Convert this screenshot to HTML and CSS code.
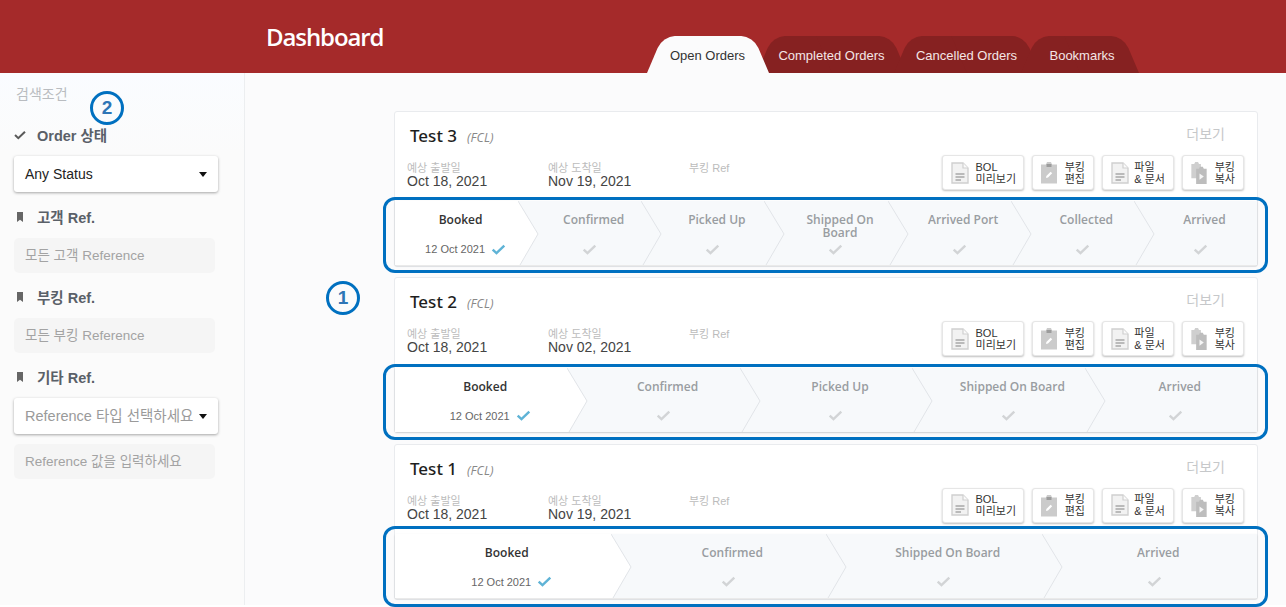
FILE: index.html
```html
<!DOCTYPE html>
<html lang="ko">
    <head>
        <meta charset="UTF-8">
        <meta name="viewport" content="width=device-width, initial-scale=1.0">
        <title>Dashboard</title>
        <link rel="stylesheet" href="styles.css">
    </head>
    <body>
        <svg class="sprites" width="0" height="0">
            <symbol id="chev" viewBox="0 0 21 64" preserveAspectRatio="none">
                <path d="M0 0 L20 33 L2 64 L0 64 Z" stroke="none"/>
                <path d="M0 0 L20 33 L2 64" fill="none" stroke="#e1e4e8"/>
            </symbol>
            <symbol id="check" viewBox="0 0 14 11">
                <path d="M1.2 5.6 L5 9.2 L12.8 1.6" fill="none" stroke="currentColor" stroke-width="2.4"/>
            </symbol>
            <symbol id="bookmark" viewBox="0 0 8 10">
                <path d="M1 0 H7 V10 L4 7.8 L1 10 Z" fill="#666"/>
            </symbol>
            <symbol id="doc" viewBox="0 0 18 22">
                <path d="M1 1 H12 L17 6 V21 H1 Z" fill="#f2f2f2" stroke="#d0d0d0" stroke-width="1.4"/>
                <path d="M12 1 V6 H17" fill="#fafafa" stroke="#d0d0d0" stroke-width="1.2"/>
                <path d="M4.5 12 H13.5 M4.5 15 H13.5 M4.5 18 H10" stroke="#a8a8a8" stroke-width="1.3"/>
            </symbol>
            <symbol id="edit" viewBox="0 0 16 22">
                <path d="M0 3 H5 L6 0.5 H10 L11 3 H16 V22 H0 Z" fill="#cbcbcb"/>
                <path d="M5.5 2.5 H10.5 V5.5 H5.5 Z" fill="#9c9c9c"/>
                <path d="M5 16.5 L5.4 14.4 L9.6 10.2 L11.2 11.8 L7 16 Z" fill="#fff"/>
            </symbol>
            <symbol id="copy" viewBox="0 0 16 24">
                <path d="M0 3 H3 L4 1 H7 L8 3 H10 V18 H0 Z" fill="#cfcfcf"/>
                <path d="M5 8 H8 L9 6 H12 L13 8 H16 V24 H5 Z" fill="#bdbdbd"/>
                <path d="M8.5 13 L13 16.2 L8.5 19.5 Z" fill="#f6f6f6"/>
            </symbol>
        </svg>

        <header class="topbar">
            <h1 class="title">Dashboard</h1>
            <nav class="tabs">
                <a class="tab active tab-open">Open Orders</a>
                <a class="tab tab-completed">Completed Orders</a>
                <a class="tab tab-cancelled">Cancelled Orders</a>
                <a class="tab tab-bookmarks">Bookmarks</a>
            </nav>
        </header>

        <div class="layout">
            <aside class="sidebar">
                <div class="side-title">검색조건</div>

                <div class="side-label"><svg class="side-icon check-icon"><use href="#check"/></svg>Order 상태</div>
                <div class="select">Any Status</div>

                <div class="side-label"><svg class="side-icon"><use href="#bookmark"/></svg>고객 Ref.</div>
                <div class="field">모든 고객 Reference</div>

                <div class="side-label"><svg class="side-icon"><use href="#bookmark"/></svg>부킹 Ref.</div>
                <div class="field">모든 부킹 Reference</div>

                <div class="side-label"><svg class="side-icon"><use href="#bookmark"/></svg>기타 Ref.</div>
                <div class="select muted">Reference 타입 선택하세요</div>
                <div class="field">Reference 값을 입력하세요</div>
            </aside>

            <main class="orders">
                <section class="card">
                    <div class="card-head">
                        <div><span class="card-name">Test 3</span><span class="card-type">(FCL)</span></div>
                        <a class="more">더보기</a>
                    </div>
                    <div class="card-info">
                        <div class="meta"><span>예상 출발일</span>Oct 18, 2021</div>
                        <div class="meta"><span>예상 도착일</span>Nov 19, 2021</div>
                        <div class="meta"><span>부킹 Ref</span></div>
                        <div class="actions">
                            <a class="btn btn-bol"><svg class="btn-doc"><use href="#doc"/></svg><span>BOL<br>미리보기</span></a>
                            <a class="btn btn-edit"><svg class="btn-clip"><use href="#edit"/></svg><span class="center">부킹<br>편집</span></a>
                            <a class="btn btn-files"><svg class="btn-doc"><use href="#doc"/></svg><span>파일<br>&amp; 문서</span></a>
                            <a class="btn btn-copy"><svg class="btn-clip"><use href="#copy"/></svg><span class="center">부킹<br>복사</span></a>
                        </div>
                    </div>
                    <div class="stepper">
                        <div class="step done"><b>Booked</b><p>12 Oct 2021<svg class="tick"><use href="#check"/></svg></p><svg class="chev"><use href="#chev"/></svg></div>
                        <div class="step"><b>Confirmed</b><p><svg class="tick"><use href="#check"/></svg></p><svg class="chev"><use href="#chev"/></svg></div>
                        <div class="step"><b>Picked Up</b><p><svg class="tick"><use href="#check"/></svg></p><svg class="chev"><use href="#chev"/></svg></div>
                        <div class="step"><b class="two-line">Shipped On Board</b><p><svg class="tick"><use href="#check"/></svg></p><svg class="chev"><use href="#chev"/></svg></div>
                        <div class="step"><b>Arrived Port</b><p><svg class="tick"><use href="#check"/></svg></p><svg class="chev"><use href="#chev"/></svg></div>
                        <div class="step"><b>Collected</b><p><svg class="tick"><use href="#check"/></svg></p><svg class="chev"><use href="#chev"/></svg></div>
                        <div class="step"><b>Arrived</b><p><svg class="tick"><use href="#check"/></svg></p></div>
                    </div>
                </section>

                <section class="card">
                    <div class="card-head">
                        <div><span class="card-name">Test 2</span><span class="card-type">(FCL)</span></div>
                        <a class="more">더보기</a>
                    </div>
                    <div class="card-info">
                        <div class="meta"><span>예상 출발일</span>Oct 18, 2021</div>
                        <div class="meta"><span>예상 도착일</span>Nov 02, 2021</div>
                        <div class="meta"><span>부킹 Ref</span></div>
                        <div class="actions">
                            <a class="btn btn-bol"><svg class="btn-doc"><use href="#doc"/></svg><span>BOL<br>미리보기</span></a>
                            <a class="btn btn-edit"><svg class="btn-clip"><use href="#edit"/></svg><span class="center">부킹<br>편집</span></a>
                            <a class="btn btn-files"><svg class="btn-doc"><use href="#doc"/></svg><span>파일<br>&amp; 문서</span></a>
                            <a class="btn btn-copy"><svg class="btn-clip"><use href="#copy"/></svg><span class="center">부킹<br>복사</span></a>
                        </div>
                    </div>
                    <div class="stepper">
                        <div class="step done"><b>Booked</b><p>12 Oct 2021<svg class="tick"><use href="#check"/></svg></p><svg class="chev"><use href="#chev"/></svg></div>
                        <div class="step"><b>Confirmed</b><p><svg class="tick"><use href="#check"/></svg></p><svg class="chev"><use href="#chev"/></svg></div>
                        <div class="step"><b>Picked Up</b><p><svg class="tick"><use href="#check"/></svg></p><svg class="chev"><use href="#chev"/></svg></div>
                        <div class="step"><b>Shipped On Board</b><p><svg class="tick"><use href="#check"/></svg></p><svg class="chev"><use href="#chev"/></svg></div>
                        <div class="step"><b>Arrived</b><p><svg class="tick"><use href="#check"/></svg></p></div>
                    </div>
                </section>

                <section class="card">
                    <div class="card-head">
                        <div><span class="card-name">Test 1</span><span class="card-type">(FCL)</span></div>
                        <a class="more">더보기</a>
                    </div>
                    <div class="card-info">
                        <div class="meta"><span>예상 출발일</span>Oct 18, 2021</div>
                        <div class="meta"><span>예상 도착일</span>Nov 19, 2021</div>
                        <div class="meta"><span>부킹 Ref</span></div>
                        <div class="actions">
                            <a class="btn btn-bol"><svg class="btn-doc"><use href="#doc"/></svg><span>BOL<br>미리보기</span></a>
                            <a class="btn btn-edit"><svg class="btn-clip"><use href="#edit"/></svg><span class="center">부킹<br>편집</span></a>
                            <a class="btn btn-files"><svg class="btn-doc"><use href="#doc"/></svg><span>파일<br>&amp; 문서</span></a>
                            <a class="btn btn-copy"><svg class="btn-clip"><use href="#copy"/></svg><span class="center">부킹<br>복사</span></a>
                        </div>
                    </div>
                    <div class="stepper">
                        <div class="step done"><b>Booked</b><p>12 Oct 2021<svg class="tick"><use href="#check"/></svg></p><svg class="chev"><use href="#chev"/></svg></div>
                        <div class="step"><b>Confirmed</b><p><svg class="tick"><use href="#check"/></svg></p><svg class="chev"><use href="#chev"/></svg></div>
                        <div class="step"><b>Shipped On Board</b><p><svg class="tick"><use href="#check"/></svg></p><svg class="chev"><use href="#chev"/></svg></div>
                        <div class="step"><b>Arrived</b><p><svg class="tick"><use href="#check"/></svg></p></div>
                    </div>
                </section>
            </main>
        </div>

        <!-- blue callouts drawn on top of the page -->
        <div class="callout-num num-2">2</div>
        <div class="callout-num num-1">1</div>
        <div class="callout-frame frame-1"></div>
        <div class="callout-frame frame-2"></div>
        <div class="callout-frame frame-3"></div>
    </body>
</html>
```

FILE: styles.css
```css
* {
    box-sizing: border-box;
}
html, body {
    height: 607px;
    overflow: hidden;
}
body {
    margin: 0;
    position: relative;
    background: #fff;
    color: #333;
    font-family: "Liberation Sans", "Noto Sans CJK KR", sans-serif;
}
.sprites {
    position: absolute;
}

/* header */
.topbar {
    display: grid;
    grid-template-columns: 647px 1fr;
    height: 73px;
    background: #a52a2a;
}
.title {
    margin: 0;
    padding: 21px 0 0 266px;
    font-family: "Open Sans", sans-serif;
    font-size: 24px;
    line-height: 32px;
    font-weight: 600;
    letter-spacing: -1.1px;
    color: #fff;
}
.tabs {
    display: flex;
    align-items: flex-end;
}
.tab {
    position: relative;
    z-index: 1;
    display: block;
    height: 37px;
    line-height: 39px;
    text-align: center;
    font-size: 13px;
    color: #f4e6e6;
}
.tab::before, .tab::after {
    content: "";
    position: absolute;
    top: 0;
    bottom: 0;
    width: 50%;
    background: #862121;
    z-index: -1;
}
.tab::before {
    left: 0;
    transform-origin: bottom left;
    transform: skewX(-23deg);
    border-radius: 12px 0 0 0;
}
.tab::after {
    right: 0;
    transform-origin: bottom right;
    transform: skewX(23deg);
    border-radius: 0 12px 0 0;
}
.tab.active {
    z-index: 2;
    color: #333;
}
.tab.active::before, .tab.active::after {
    background: #fbfbfc;
}
.tab-open {
    width: 121px;
    margin-left: 0;
}
.tab-completed {
    width: 149px;
    margin-left: -11px;
}
.tab-cancelled {
    width: 145px;
    margin-left: -12px;
}
.tab-bookmarks {
    width: 117px;
    margin-left: -18px;
    padding-left: 5px;
}

.layout {
    display: grid;
    grid-template-columns: 245px 1fr;
    height: 532px;
    background: #fbfbfc;
}

/* sidebar */
.sidebar {
    padding: 12px 26px 0 14px;
    border-right: 1px solid #eceef0;
    background: linear-gradient(#fafcff, #fbfbfb 80px);
}
.side-title {
    padding-left: 2px;
    font-size: 14px;
    line-height: 18px;
    color: #b9bcc0;
}
.side-label {
    display: flex;
    align-items: center;
    height: 20px;
    margin: 0 0 10px;
    padding-bottom: 3px;
    font-size: 14.5px;
    font-weight: bold;
    color: #5a6068;
}
.side-label:nth-of-type(2) {
    margin-top: 23px;
}
.side-icon {
    width: 8px;
    height: 10px;
    margin: 0 13px 0 2px;
    flex: none;
}
.check-icon {
    width: 12px;
    height: 10px;
    margin: 0 11px 0 0;
    color: #5a5a5a;
}
.select {
    position: relative;
    width: 204px;
    height: 36px;
    margin-bottom: 16px;
    padding: 0 11px;
    line-height: 36px;
    font-size: 14px;
    color: #222;
    background: #fff;
    border-radius: 3px;
    box-shadow: 0 1px 3px rgba(0, 0, 0, 0.35);
}
.select::after {
    content: "";
    position: absolute;
    right: 11px;
    top: 16px;
    border-left: 4px solid transparent;
    border-right: 4px solid transparent;
    border-top: 5px solid #111;
}
.select.muted {
    margin-bottom: 10px;
    font-size: 14.5px;
    color: #9a9a9a;
    white-space: nowrap;
}
.field {
    width: 201px;
    height: 35px;
    margin-bottom: 15px;
    padding: 0 11px;
    line-height: 35px;
    font-size: 13.5px;
    color: #a3a3a3;
    background: #f5f5f5;
    border-radius: 5px;
}

/* order cards */
.orders {
    display: flex;
    flex-direction: column;
    gap: 10.4px;
    padding: 38px 28px 0 149px;
}
.card {
    height: 156px;
    flex: none;
    background: #fff;
    border: 1px solid #e9ebee;
    border-radius: 3px;
}
.card-head {
    display: flex;
    justify-content: space-between;
    height: 43px;
    padding: 12px 32px 0 15px;
}
.card-name {
    font-family: "Noto Sans", sans-serif;
    font-size: 17px;
    line-height: 24px;
    font-weight: 500;
    color: #1e1e1e;
}
.card-type {
    margin-left: 10px;
    font-family: "Open Sans", sans-serif;
    font-size: 12.5px;
    font-style: italic;
    color: #888;
}
.more {
    font-size: 14px;
    line-height: 21px;
    color: #c6c8ca;
}
.card-info {
    display: flex;
    height: 46.2px;
    padding: 0 13px 0 12px;
}
.meta {
    width: 141px;
    padding-top: 7px;
    font-size: 14px;
    line-height: 15px;
    color: #444;
}
.meta span {
    display: block;
    height: 12px;
    font-size: 11px;
    line-height: 13px;
    color: #bcbcbc;
}
.actions {
    display: flex;
    gap: 8px;
    margin-left: auto;
}
.btn {
    display: flex;
    align-items: center;
    justify-content: space-between;
    height: 35px;
    padding: 0 8px;
    font-size: 11px;
    line-height: 12px;
    color: #333;
    background: #fff;
    border: 1px solid #e6e6e6;
    border-radius: 3px;
    box-shadow: 0 1px 2px rgba(0, 0, 0, 0.25);
}
.btn .center {
    text-align: center;
}
.btn-bol {
    width: 82px;
    padding-right: 7px;
}
.btn-edit {
    width: 62px;
}
.btn-files {
    width: 72px;
}
.btn-copy {
    width: 62px;
}
.btn-doc {
    width: 18px;
    height: 22px;
    flex: none;
}
.btn-clip {
    width: 16px;
    height: 23px;
    flex: none;
}

/* status stepper */
.stepper {
    display: grid;
    grid-auto-flow: column;
    grid-auto-columns: 1fr;
    height: 64px;
    background: #f7f9fb;
    box-shadow: 0 1px 2px rgba(0, 0, 0, 0.12);
}
.step {
    position: relative;
    min-width: 0;
    padding: 10px 0 0 28px;
    text-align: center;
    fill: #f7f9fb;
}
.step:last-child {
    padding-left: 18px;
}
.step.done {
    padding-left: 8px;
    background: #fff;
    fill: #fff;
}
.step b {
    display: block;
    height: 25px;
    font-family: "Open Sans", sans-serif;
    font-size: 12px;
    line-height: 18px;
    font-weight: 600;
    color: #999da1;
}
.step b.two-line {
    padding: 2px 10px 0;
    line-height: 13px;
}
.step p {
    display: flex;
    justify-content: center;
    align-items: center;
    gap: 6px;
    margin: 0;
    height: 26px;
    padding-right: 8px;
    font-size: 11px;
    color: #666;
}
.step.done p {
    padding: 0 0 0 10px;
}
.step.done b {
    color: #333;
}
.tick {
    width: 15px;
    height: 11px;
    color: #d2d4d6;
}
.done .tick {
    color: #5fb3d6;
}
.chev {
    position: absolute;
    z-index: 1;
    top: 0;
    left: 100%;
    width: 21px;
    height: 64px;
}

/* callouts */
.callout-num {
    position: absolute;
    z-index: 5;
    width: 34px;
    height: 34px;
    border: 3px solid #0070c0;
    border-radius: 50%;
    text-align: center;
    font-size: 19px;
    line-height: 28px;
    font-weight: bold;
    color: #2e75b6;
}
.num-2 {
    left: 90px;
    top: 91px;
}
.num-1 {
    left: 326px;
    top: 281px;
}
.callout-frame {
    position: absolute;
    z-index: 5;
    left: 383px;
    width: 885px;
    border: 3px solid #0070c0;
    border-radius: 12px;
}
.frame-1 {
    top: 197px;
    height: 76px;
}
.frame-2 {
    top: 364px;
    height: 76px;
}
.frame-3 {
    top: 526px;
    height: 81px;
}
```
